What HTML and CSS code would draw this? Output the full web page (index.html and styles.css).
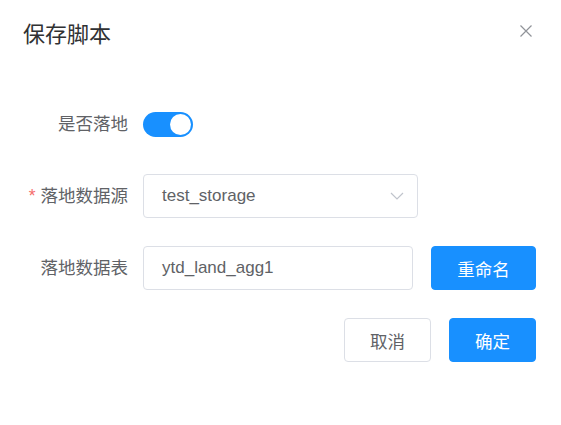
FILE: index.html
```html
<!DOCTYPE html>
<html lang="zh">
<head>
<meta charset="utf-8">
<link rel="stylesheet" href="styles.css">
</head>
<body>
<div class="dialog">
  <div class="header">
    <span class="title">保存脚本</span>
    <svg class="close" width="12" height="12" viewBox="0 0 12 12"><path d="M0.5 0.5L11.5 11.5M11.5 0.5L0.5 11.5" stroke="#909399" stroke-width="1.2" fill="none"/></svg>
  </div>
  <div class="form">
    <div class="row">
      <label class="label">是否落地</label>
      <div class="control">
        <span class="switch"><span class="knob"></span></span>
      </div>
    </div>
    <div class="row">
      <label class="label"><span class="req">*</span>落地数据源</label>
      <div class="control">
        <div class="select">
          <span>test_storage</span>
          <svg class="arrow" width="14" height="8" viewBox="0 0 14 8"><path d="M1 1L7 7L13 1" stroke="#c0c4cc" stroke-width="1.2" fill="none"/></svg>
        </div>
      </div>
    </div>
    <div class="row">
      <label class="label">落地数据表</label>
      <div class="control">
        <div class="input">ytd_land_agg1</div>
        <button class="btn primary rename">重命名</button>
      </div>
    </div>
    <div class="footer">
      <button class="btn">取消</button>
      <button class="btn primary">确定</button>
    </div>
  </div>
</div>
</body>
</html>
```
FILE: styles.css
```css
* { box-sizing: border-box; }
body {
  margin: 0;
  background: #fff;
  font-family: "Liberation Sans", "Noto Sans CJK SC", sans-serif;
  color: #606266;
}
.dialog {
  width: 561px;
  height: 425px;
  background: #fff;
}
.header {
  display: flex;
  justify-content: space-between;
  align-items: flex-start;
  padding: 22px 29px 0 23px;
  height: 50px;
}
.title {
  font-size: 22px;
  line-height: 26px;
  color: #303133;
}
.close {
  margin-top: 3px;
}
.form {
  padding-top: 52px;
  padding-right: 25px;
}
.row {
  display: flex;
  align-items: center;
  height: 44px;
  margin-bottom: 28px;
}
.label {
  width: 143px;
  padding-right: 15px;
  text-align: right;
  font-size: 17.5px;
  line-height: 44px;
  color: #606266;
}
.req {
  color: #f56c6c;
  margin-right: 5px;
}
.control {
  display: flex;
  align-items: center;
}
.switch {
  position: relative;
  display: inline-block;
  width: 50px;
  height: 25px;
  border-radius: 13px;
  background: #1890ff;
}
.knob {
  position: absolute;
  top: 2px;
  right: 2px;
  width: 21px;
  height: 21px;
  border-radius: 50%;
  background: #fff;
}
.select, .input {
  display: flex;
  align-items: center;
  height: 44px;
  border: 1px solid #dcdfe6;
  border-radius: 4px;
  padding: 0 18px;
  font-size: 17px;
  color: #606266;
}
.select {
  width: 275px;
  justify-content: space-between;
  padding-right: 13px;
}
.input {
  width: 270px;
}
.btn {
  height: 44px;
  border: 1px solid #dcdfe6;
  border-radius: 4px;
  background: #fff;
  color: #606266;
  font-family: inherit;
  font-size: 17.5px;
  width: 87px;
  padding: 0;
}
.btn.primary {
  background: #1890ff;
  border-color: #1890ff;
  color: #fff;
}
.rename {
  width: 105px;
  margin-left: 18px;
}
.footer {
  display: flex;
  justify-content: flex-end;
  gap: 18px;
  margin-top: 2px;
}
```
